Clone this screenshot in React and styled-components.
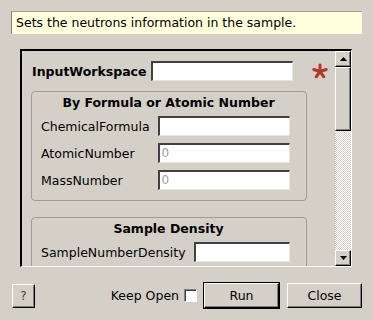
import React from "react";
import styled, { createGlobalStyle } from "styled-components";

const Global = createGlobalStyle`
  html, body { margin: 0; padding: 0; background: #d4d0c8; }
  body { font-family: "DejaVu Sans", sans-serif; font-size: 12.5px; color: #000; }
  * { box-sizing: border-box; }
`;

const Dialog = styled.div`
  width: 373px;
  height: 320px;
  padding: 11px 11px 0 11px;
  display: flex;
  flex-direction: column;
  overflow: hidden;
`;

const Description = styled.div`
  height: 23px;
  width: 351px;
  background: #ffffdc;
  border-top: 1px solid #a0a0a0;
  border-left: 1px solid #808080;
  padding: 3px 0 0 4px;
  font-size: 12.5px;
  line-height: 16px;
  white-space: nowrap;
`;

const Frame = styled.div`
  margin: 15px 0 0 9px;
  width: 332px;
  height: 218px;
  border-top: 2px solid #000;
  border-left: 2px solid #000;
  border-right: 1px solid #fff;
  border-bottom: 1px solid #fff;
  display: flex;
  overflow: hidden;
`;

const Content = styled.div`
  flex: 1;
  padding: 10px 0 0 9px;
  display: flex;
  flex-direction: column;
  gap: 10px;
  overflow: hidden;
`;

const TopRow = styled.div`
  display: flex;
  align-items: center;
  padding-left: 1px;
`;

const BoldLabel = styled.span`
  font-weight: bold;
  margin-right: 4px;
`;

const Input = styled.div`
  width: ${(p) => p.$w || "auto"};
  flex: ${(p) => (p.$w ? "none" : "1")};
  height: 20px;
  background: #fff;
  border-top: 2px solid #404040;
  border-left: 2px solid #404040;
  border-right: 1px solid #e8e6e0;
  border-bottom: 1px solid #e8e6e0;
  color: #a0a0a0;
  padding-left: 2px;
  line-height: 16px;
  font-size: 12px;
`;

const Star = styled.svg`
  margin-left: 19px;
  width: 16px;
  height: 17px;
`;

const Group = styled.div`
  width: 276px;
  flex: none;
  margin-top: ${(p) => p.$mt || "0px"};
  border: 1px solid #a09c94;
  border-radius: 4px;
  padding: 3px 16px 10px 9px;
`;

const GroupTitle = styled.div`
  font-weight: bold;
  text-align: center;
  line-height: 16px;
  margin-bottom: 5px;
  padding-left: 6px;
`;

const Rows = styled.div`
  display: grid;
  grid-template-columns: auto 1fr;
  column-gap: 8px;
  row-gap: 7px;
  align-items: center;
`;

const Label = styled.span`
  white-space: nowrap;
`;

const ScrollBar = styled.div`
  width: 16px;
  display: flex;
  flex-direction: column;
`;

const bevel = `
  background: #d4d0c8;
  border-top: 1px solid #fff;
  border-left: 1px solid #fff;
  border-right: 1px solid #000;
  border-bottom: 1px solid #000;
  box-shadow: inset -1px -1px 0 #808080;
`;

const ArrowBtn = styled.div`
  ${bevel}
  height: 16px;
  display: flex;
  align-items: center;
  justify-content: center;
`;

const Thumb = styled.div`
  ${bevel}
  height: 64px;
`;

const Track = styled.div`
  flex: 1;
  background-color: #d4d0c8;
  background-image: repeating-conic-gradient(#ffffff 0 25%, #d4d0c8 0 50%);
  background-size: 2px 2px;
`;

const Footer = styled.div`
  margin-top: 15px;
  display: flex;
  align-items: center;
  padding-left: 1px;
`;

const Button = styled.div`
  ${bevel}
  width: ${(p) => p.$w};
  height: ${(p) => p.$h || "25px"};
  display: flex;
  align-items: center;
  justify-content: center;
  font-size: ${(p) => p.$fs || "12.5px"};
  color: ${(p) => p.$c || "#000"};
`;

const DefaultFrame = styled.div`
  border: 1px solid #000;
  display: flex;
`;

const KeepOpen = styled.label`
  margin-left: auto;
  display: flex;
  align-items: center;
  gap: 5px;
  margin-right: 6px;
  font-size: 12.5px;
`;

const Check = styled.span`
  width: 13px;
  height: 13px;
  background: #fff;
  border-top: 1px solid #808080;
  border-left: 1px solid #808080;
  border-right: 1px solid #fff;
  border-bottom: 1px solid #fff;
  box-shadow: inset 1px 1px 0 #404040;
`;

const Gap = styled.div`
  width: ${(p) => p.$w};
`;

const Tri = ({ down }) => (
  <svg width="7" height="4" viewBox="0 0 7 4">
    <polygon points={down ? "0,0 7,0 3.5,4" : "0,4 7,4 3.5,0"} fill="#000" />
  </svg>
);

export default function App() {
  const arms = [0, 72, 144, 216, 288];
  return (
    <>
      <Global />
      <Dialog>
        <Description>Sets the neutrons information in the sample.</Description>
        <Frame>
          <Content>
            <TopRow>
              <BoldLabel>InputWorkspace</BoldLabel>
              <Input $w="142px" />
              <Star viewBox="-8 -8.5 16 17">
                {arms.map((a) => (
                  <line
                    key={a}
                    x1="0"
                    y1="0"
                    x2="0"
                    y2="-6.5"
                    stroke="#b5382a"
                    strokeWidth="3"
                    strokeLinecap="round"
                    transform={`rotate(${a})`}
                  />
                ))}
              </Star>
            </TopRow>
            <Group>
              <GroupTitle>By Formula or Atomic Number</GroupTitle>
              <Rows>
                <Label>ChemicalFormula</Label>
                <Input />
                <Label>AtomicNumber</Label>
                <Input>0</Input>
                <Label>MassNumber</Label>
                <Input>0</Input>
              </Rows>
            </Group>
            <Group $mt="6px">
              <GroupTitle>Sample Density</GroupTitle>
              <Rows>
                <Label>SampleNumberDensity</Label>
                <Input />
              </Rows>
            </Group>
          </Content>
          <ScrollBar>
            <ArrowBtn>
              <Tri />
            </ArrowBtn>
            <Thumb />
            <Track />
            <ArrowBtn>
              <Tri down />
            </ArrowBtn>
          </ScrollBar>
        </Frame>
        <Footer>
          <Button $w="23px" $h="24px" $fs="12px" $c="#404040">?</Button>
          <KeepOpen>
            Keep Open
            <Check />
          </KeepOpen>
          <DefaultFrame>
            <Button $w="75px" $h="25px">Run</Button>
          </DefaultFrame>
          <Gap $w="7px" />
          <Button $w="75px" $h="25px">Close</Button>
        </Footer>
      </Dialog>
    </>
  );
}
